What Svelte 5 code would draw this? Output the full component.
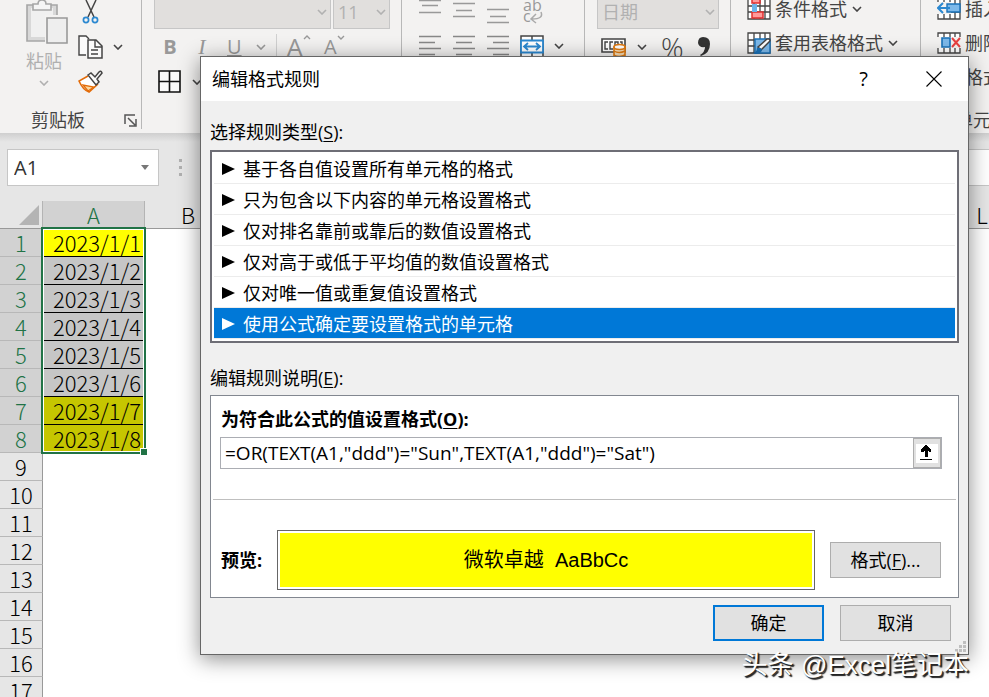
<script lang="ts">
	/**
	 * Spreadsheet window with the "Edit Formatting Rule" dialog open on top.
	 */

	const ruleTypes = [
		'基于各自值设置所有单元格的格式',
		'只为包含以下内容的单元格设置格式',
		'仅对排名靠前或靠后的数值设置格式',
		'仅对高于或低于平均值的数值设置格式',
		'仅对唯一值或重复值设置格式',
		'使用公式确定要设置格式的单元格'
	];

	const rows = Array.from({ length: 17 }, (_, i) => ({
		number: i + 1,
		date: i < 8 ? `2023/1/${i + 1}` : ''
	}));

	// Weekend dates are the ones the rule paints yellow
	const weekend = [1, 7, 8];

	let selectedRule = $state(5);
	let formula = $state('=OR(TEXT(A1,"ddd")="Sun",TEXT(A1,"ddd")="Sat")');
	let cellName = $state('A1');
</script>

{#snippet chevron()}
	<svg class="chevron" width="10" height="6" viewBox="0 0 10 6">
		<path d="M1 1l4 4 4-4" fill="none" stroke="currentColor" stroke-width="1.6" />
	</svg>
{/snippet}

{#snippet gridIcon()}
	<path d="M1 1h22v20H1zM1 8h22M1 14h22M7 1v20M13 1v20M18 1v20" fill="#fff" stroke="#444" stroke-width="1.3" />
{/snippet}

<div class="window">
	<header class="ribbon">
		<section class="group clipboard">
			<div class="clipboard-tools">
				<button class="paste" disabled>
					<svg width="42" height="44" viewBox="0 0 42 44">
						<path d="M1 5h30v36H1z" fill="#d8d8d8" stroke="#a6a6a6" stroke-width="1.6" />
						<path d="M5 8h22v29H5z" fill="#f0f0f0" />
						<path d="M7 10V4h5q0-4 4-4t4 4h5v6z" fill="#f5f5f5" stroke="#a6a6a6" stroke-width="1.6" />
						<path d="M19 15h23v29H19z" fill="#f3f2f1" />
						<path d="M21 18h20v25H21z" fill="#eee" stroke="#999" stroke-width="1.6" />
					</svg>
					<span>粘贴</span>
					{@render chevron()}
				</button>
				<div class="edit-tools">
					<button class="tool cut" aria-label="剪切">
						<svg width="18" height="24" viewBox="0 0 18 24">
							<path d="M4 0l8 17M14 0L6 17" fill="none" stroke="#444" stroke-width="1.5" />
							<circle cx="4" cy="20" r="2.6" fill="none" stroke="#2b88d0" stroke-width="1.7" />
							<circle cx="13" cy="20" r="2.6" fill="none" stroke="#2b88d0" stroke-width="1.7" />
						</svg>
					</button>
					<button class="tool copy" aria-label="复制">
						<svg width="25" height="24" viewBox="0 0 25 24">
							<path d="M8 20H1V1h7l3 3" fill="#fafafa" stroke="#444" stroke-width="1.4" />
							<path d="M10 5h8l6 6v12H10z" fill="#fafafa" stroke="#444" stroke-width="1.5" />
							<path d="M17 5v7h7M13 15h7M13 19h7" fill="none" stroke="#444" stroke-width="1.4" />
						</svg>
						{@render chevron()}
					</button>
					<button class="tool" aria-label="格式刷">
						<svg width="26" height="24" viewBox="0 0 26 24">
							<path d="M10 6L1 11q4 9 10 11l9-8" fill="#fff" stroke="#e36c09" stroke-width="1.6" />
							<path d="M5 15l5 6 6-4z" fill="#fcd9a0" stroke="#e36c09" stroke-width="1.3" />
							<path d="M10 5l3-2 4 4 4-5q2-2 3 1l-5 6 2 3-3 3z" fill="#fafafa" stroke="#444" stroke-width="1.5" />
						</svg>
					</button>
				</div>
			</div>
			<footer>
				<span>剪贴板</span>
				<button class="tool" aria-label="剪贴板设置">
					<svg width="13" height="13" viewBox="0 0 13 13">
						<path d="M1 10V1h10M4 4l7 7M12 5v7H5" fill="none" stroke="#555" stroke-width="1.5" />
					</svg>
				</button>
			</footer>
		</section>

		<section class="group font">
			<div class="combos">
				<label class="combo wide">
					<select disabled aria-label="字体"><option></option></select>
					{@render chevron()}
				</label>
				<label class="combo small">
					<select disabled aria-label="字号"><option>11</option></select>
					{@render chevron()}
				</label>
			</div>
			<div class="font-styles">
				<button class="bold" disabled>B</button>
				<button class="italic" disabled>I</button>
				<button class="underline" disabled>U</button>
				{@render chevron()}
				<i class="rule"></i>
				<button class="grow" disabled>A<svg width="8" height="5" viewBox="0 0 8 5"><path d="M1 4l3-3 3 3" fill="none" stroke="currentColor" stroke-width="1.4" /></svg></button>
				<button class="shrink" disabled>A<svg width="8" height="5" viewBox="0 0 8 5"><path d="M1 1l3 3 3-3" fill="none" stroke="currentColor" stroke-width="1.4" /></svg></button>
			</div>
			<button class="tool borders" aria-label="边框">
				<svg width="24" height="24" viewBox="0 0 24 24">
					<path d="M1 1h21v21H1zM11.500 1v21M1 11.500h21" fill="#fafafa" stroke="#111" stroke-width="1.6" />
				</svg>
				{@render chevron()}
			</button>
		</section>

		<section class="group align">
			<button class="tool" disabled aria-label="顶端对齐">
				<svg width="24" height="26" viewBox="0 0 24 26"><path d="M1 .5h22M4 5.500h16M1 12.500h22" stroke="#999" stroke-width="1.4" /></svg>
			</button>
			<button class="tool" disabled aria-label="垂直居中">
				<svg width="24" height="26" viewBox="0 0 24 26"><path d="M1 3.500h22M4 10.500h16M1 16.500h22" stroke="#999" stroke-width="1.4" /></svg>
			</button>
			<button class="tool" disabled aria-label="底端对齐">
				<svg width="24" height="26" viewBox="0 0 24 26"><path d="M1 9.500h22M4 16.500h16M1 22.500h22" stroke="#999" stroke-width="1.4" /></svg>
			</button>
			<button class="tool wrap" disabled aria-label="自动换行">
				<svg width="24" height="26" viewBox="0 0 24 26">
					<text x="3" y="11">ab</text>
					<text x="3" y="22">c</text>
					<path d="M21 12q3 7-9 7M16 14l-5 5 5 4" fill="none" stroke="#aaa" stroke-width="1.5" />
				</svg>
			</button>
			<button class="tool" disabled aria-label="左对齐">
				<svg width="24" height="26" viewBox="0 0 24 26"><path d="M1 3.500h22M1 9.500h16M1 15.500h22M1 21.500h16" stroke="#888" stroke-width="1.4" /></svg>
			</button>
			<button class="tool" disabled aria-label="居中">
				<svg width="24" height="26" viewBox="0 0 24 26"><path d="M1 3.500h22M4 9.500h16M1 15.500h22M4 21.500h16" stroke="#888" stroke-width="1.4" /></svg>
			</button>
			<button class="tool" disabled aria-label="右对齐">
				<svg width="24" height="26" viewBox="0 0 24 26"><path d="M1 3.500h22M7 9.500h16M1 15.500h22M7 21.500h16" stroke="#888" stroke-width="1.4" /></svg>
			</button>
			<button class="tool" aria-label="合并后居中">
				<svg width="24" height="26" viewBox="0 0 24 26">
					<path d="M1 3h22v21H1zM12 3v21" fill="#fff" stroke="#444" stroke-width="1.5" />
					<path d="M1 7.500h22v12H1z" fill="#fff" stroke="#2b88d0" stroke-width="1.8" />
					<path d="M4 13.500h16M8 10l-4 3.500L8 17M16 10l4 3.500-4 3.500" fill="none" stroke="#2b88d0" stroke-width="1.8" />
				</svg>
				{@render chevron()}
			</button>
		</section>

		<section class="group number">
			<label class="combo">
				<select disabled aria-label="数字格式"><option>日期</option></select>
				{@render chevron()}
			</label>
			<div class="number-tools">
				<button class="tool" aria-label="会计数字格式">
					<svg width="26" height="22" viewBox="0 0 26 22">
						<path d="M1 3h23v13H1z" fill="#fff" stroke="#444" stroke-width="1.6" />
						<path d="M7 6H4v7h3M12 6H9v7h3M14 9V6h3v3M19 6h2v3" fill="none" stroke="#444" stroke-width="1.4" />
						<path d="M13 11v10h11V11z" fill="#fbe0b8" stroke="#e07a10" stroke-width="1.6" />
						<path d="M13 15q5 3 11 0M13 19q5 3 11 0" fill="none" stroke="#e07a10" stroke-width="1.4" />
						<ellipse cx="18.500" cy="11" rx="5.500" ry="2.500" fill="#fff" stroke="#e07a10" stroke-width="1.6" />
					</svg>
					{@render chevron()}
				</button>
				<button class="percent">%</button>
				<button class="tool" aria-label="千位分隔样式">
					<svg width="12" height="20" viewBox="0 0 12 20">
						<path d="M5 0q7 0 7 7 0 9-9 12l-1-1q5-3 5-8-6 1-7-4Q0 0 5 0z" fill="#333" />
					</svg>
				</button>
			</div>
		</section>

		<section class="group styles">
			<button class="command">
				<svg width="24" height="22" viewBox="0 0 24 22">
					{@render gridIcon()}
					<path d="M5 0h8v5H5zM5 14h11v6H5z" fill="#ff9a9a" stroke="#e03030" stroke-width="1.5" />
					<path d="M5 6h5v8H5z" fill="#6db5ea" />
				</svg>
				<span>条件格式</span>
				{@render chevron()}
			</button>
			<button class="command">
				<svg width="24" height="22" viewBox="0 0 24 22">
					{@render gridIcon()}
					<path d="M8 7h15v14H8z" fill="#7db9ea" stroke="#1a72b8" stroke-width="1.4" />
					<path d="M22 7q2 1 0 3l-8 8-3-3 9-8z" fill="#fff" stroke="#444" stroke-width="1.5" />
					<path d="M5 21q5 0 5-5 4-1 5 2-1 4-6 4z" fill="#1a72b8" />
				</svg>
				<span>套用表格格式</span>
				{@render chevron()}
			</button>
		</section>

		<section class="group cells">
			<div class="commands">
				<button class="command">
					<svg width="24" height="22" viewBox="0 0 24 22">
						{@render gridIcon()}
						<path d="M0 4h14v12H0z" fill="#f3f2f1" />
						<path d="M10 6h13v8H10z" fill="#7db9ea" stroke="#1a72b8" stroke-width="1.4" />
						<path d="M13 10H1M6 5l-5 5 5 5" fill="none" stroke="#2b88d0" stroke-width="2" />
					</svg>
					<span>插入</span>
				</button>
				<button class="command">
					<svg width="24" height="22" viewBox="0 0 24 22">
						{@render gridIcon()}
						<path d="M0 5h24v11H0z" fill="#f3f2f1" />
						<path d="M5 6h8v9H5z" fill="#7db9ea" stroke="#1a72b8" stroke-width="1.6" />
						<path d="M15 6l8 9M23 6l-8 9" stroke="#e84040" stroke-width="2" />
					</svg>
					<span>删除</span>
				</button>
				<button class="command">
					<svg width="24" height="22" viewBox="0 0 24 22">{@render gridIcon()}</svg>
					<span>格式</span>
				</button>
			</div>
			<footer>单元格</footer>
		</section>
	</header>

	<div class="formula-bar">
		<label class="name-box">
			<input aria-label="名称框" bind:value={cellName} />
			<svg width="8" height="5" viewBox="0 0 8 5"><path d="M0 0h8L4 5z" fill="#777" /></svg>
		</label>
		<div class="dots"><i></i><i></i><i></i></div>
		<input class="formula-input" aria-label="编辑栏" />
	</div>

	<main>
		<table>
			<colgroup>
				<col class="col-number" />
				<col class="col-a" />
				<col class="col-b" />
				<col />
				<col class="col-l" />
			</colgroup>
			<thead>
				<tr>
					<th class="corner">
						<svg width="20" height="20" viewBox="0 0 20 20"><path d="M20 0v20H0z" fill="#b4b4b4" /></svg>
					</th>
					<th class="active">A</th>
					<th>B</th>
					<th></th>
					<th>L</th>
				</tr>
			</thead>
			<tbody>
				{#each rows as row}
					<tr>
						<th class:active={row.date}>{row.number}</th>
						<td
							class:filled={row.date}
							class:weekend={weekend.includes(row.number)}
							class:current={row.number === 1}
						>
							{row.date}
						</td>
						<td colspan="3"></td>
					</tr>
				{/each}
			</tbody>
		</table>
		<div class="selection"><i></i></div>
	</main>

	<div class="dialog" role="dialog" aria-labelledby="dialog-title">
		<div class="title-bar">
			<h1 id="dialog-title">编辑格式规则</h1>
			<button class="help" aria-label="帮助">?</button>
			<button class="close" aria-label="关闭">
				<svg width="16" height="16" viewBox="0 0 16 16"><path d="M.5.5l15 15M15.500.5l-15 15" stroke="#000" stroke-width="1.1" /></svg>
			</button>
		</div>

		<div class="dialog-body">
			<h2 id="rule-types">选择规则类型(<u>S</u>):</h2>
			<ul class="rule-list" role="listbox" aria-labelledby="rule-types">
				{#each ruleTypes as type, i}
					<li role="option" aria-selected={i === selectedRule}>
						<button class:selected={i === selectedRule} onclick={() => (selectedRule = i)}>
							<svg width="13" height="12" viewBox="0 0 13 12"><path d="M0 0l13 6-13 6z" fill="currentColor" /></svg>
							{type}
						</button>
					</li>
				{/each}
			</ul>

			<h2>编辑规则说明(<u>E</u>):</h2>
			<div class="rule-box">
				<label class="formula-label" for="rule-formula">为符合此公式的值设置格式(<u>O</u>):</label>
				<div class="formula-field">
					<input id="rule-formula" bind:value={formula} />
					<button aria-label="折叠对话框">
						<svg width="22" height="19" viewBox="0 0 22 19">
							<path d="M0 0h22v19H0z" fill="#fff" />
							<path d="M9 1h2v1h1v1h1v1h1v1h1v3h-2V7h-1v6H9V7H8v1H5V5h1V4h1V3h1V2h1zM4 15h12v1H4z" fill="#000" />
						</svg>
					</button>
				</div>
				<hr />
				<div class="preview-row">
					<strong>预览:</strong>
					<div class="preview">微软卓越&nbsp; AaBbCc</div>
					<button class="push">格式(<u>F</u>)...</button>
				</div>
			</div>

			<div class="actions">
				<button class="push default">确定</button>
				<button class="push">取消</button>
			</div>
		</div>
		<svg class="grip" width="11" height="11" viewBox="0 0 11 11">
			<path d="M8 0h3v3H8zM4 4h3v3H4zM8 4h3v3H8zM0 8h3v3H0zM4 8h3v3H4zM8 8h3v3H8z" fill="#bfbfbf" />
		</svg>
	</div>

	<div class="watermark">头条 @Excel笔记本</div>
</div>

<style>
	:global(body) {
		margin: 0;
	}

	.window {
		position: relative;
		height: 100vh;
		overflow: hidden;
		background: #fff;
		color: #000;
		font-family: 'Open Sans', 'Noto Sans CJK SC', sans-serif;
		font-size: 18px;
	}

	.window * {
		box-sizing: border-box;
	}

	button,
	input,
	select {
		margin: 0;
		padding: 0;
		border: 0;
		border-radius: 0;
		background: none;
		color: inherit;
		font: inherit;
	}

	svg {
		display: block;
		flex: none;
	}

	u {
		text-underline-offset: 2px;
		text-decoration-thickness: 1px;
	}

	/* Ribbon */
	.ribbon {
		display: flex;
		padding-bottom: 4px;
		background: #f3f2f1;
		color: #444;
		line-height: 18px;
	}

	.group {
		flex: none;
		border-right: 1px solid #b8b8b8;
	}

	.group footer {
		display: flex;
		align-items: center;
		height: 18px;
	}

	.tool {
		display: flex;
		align-items: center;
		gap: 10px;
	}

	.clipboard {
		width: 142px;
	}

	.clipboard-tools {
		display: flex;
		gap: 16px;
		height: 100px;
		padding-left: 26px;
	}

	.paste {
		display: flex;
		flex-direction: column;
		align-items: flex-start;
		gap: 8px;
		width: 36px;
		color: #b0b0b0;
	}

	.paste span {
		white-space: nowrap;
	}

	.paste .chevron {
		margin: 2px 0 0 13px;
	}

	.edit-tools {
		display: flex;
		flex-direction: column;
		gap: 11px;
	}

	.cut {
		padding-left: 4px;
	}

	.clipboard footer {
		justify-content: space-between;
		margin-top: 11px;
		padding: 0 4px 0 31px;
	}

	.font {
		width: 260px;
		padding-left: 12px;
	}

	.combos {
		display: flex;
		gap: 2px;
	}

	.combo {
		display: grid;
		align-items: center;
		width: 122px;
		height: 29px;
		padding-bottom: 4px;
		border: 1px solid #c6c6c6;
		border-top: 0;
		background: #e1dfdd;
		color: #b1b1b1;
	}

	.combo > :global(*) {
		grid-area: 1 / 1;
	}

	.combo select {
		width: 100%;
		height: 24px;
		padding-left: 4px;
		appearance: none;
		opacity: 1;
	}

	.combo .chevron {
		justify-self: end;
		margin-right: 3px;
	}

	.wide {
		width: 177px;
	}

	.small {
		width: 57px;
	}

	.font-styles {
		display: flex;
		align-items: center;
		gap: 18px;
		height: 35px;
		padding-left: 9px;
		color: #999;
		font-size: 20px;
	}

	.font-styles button {
		min-width: 14px;
		line-height: 24px;
	}

	.font-styles .bold {
		font-weight: 700;
	}

	.font-styles .italic {
		font-family: 'Liberation Serif', serif;
		font-size: 22px;
		font-style: italic;
	}

	.font-styles .underline {
		text-decoration: underline;
	}

	.font-styles .chevron {
		margin-left: -4px;
	}

	.rule {
		width: 1px;
		height: 26px;
		margin: 0 -8px;
		background: #d0d0d0;
	}

	.font-styles .grow,
	.font-styles .shrink {
		display: flex;
		align-items: flex-start;
	}

	.font-styles .grow {
		margin-right: -5px;
		font-size: 26px;
	}

	.borders {
		height: 36px;
		margin-left: 4px;
	}

	.align {
		display: grid;
		grid-template-columns: 34px 34px 34px 1fr;
		grid-template-rows: 33px 26px;
		align-content: start;
		align-items: start;
		width: 183px;
		padding-left: 16px;
	}

	.wrap text {
		fill: #999;
		font-size: 16px;
	}

	.number {
		width: 146px;
		padding-left: 12px;
	}

	.number-tools {
		display: flex;
		align-items: center;
		gap: 14px;
		height: 36px;
		padding-left: 4px;
	}

	.percent {
		font-size: 28px;
		font-weight: 300;
		line-height: 28px;
	}

	.styles {
		display: flex;
		flex-direction: column;
		gap: 16px;
		width: 190px;
		padding-left: 16px;
	}

	.command {
		display: flex;
		align-items: center;
		gap: 4px;
		height: 18px;
		white-space: nowrap;
	}

	.command .chevron {
		margin-left: 1px;
	}

	.cells {
		flex: 1;
		min-width: 0;
		overflow: hidden;
		border: 0;
	}

	.commands {
		display: flex;
		flex-direction: column;
		gap: 16px;
		padding-left: 16px;
	}

	.cells footer {
		margin-top: 25px;
		padding-left: 34px;
		white-space: nowrap;
	}

	/* Formula bar */
	.formula-bar {
		display: flex;
		align-items: center;
		gap: 20px;
		padding: 16px 0 15px 7px;
		background: linear-gradient(#cfcfcf, #e6e6e6 9px);
	}

	.name-box {
		display: flex;
		align-items: center;
		width: 152px;
		height: 37px;
		padding: 0 9px 0 6px;
		border: 1px solid #c6c6c6;
		background: #fff;
		color: #333;
		font-size: 20px;
	}

	.name-box input {
		flex: 1;
		min-width: 0;
		outline: none;
	}

	.dots {
		display: grid;
		gap: 4px;
		width: 81px;
	}

	.dots i {
		width: 3px;
		height: 3px;
		background: #b0b0b0;
	}

	.formula-input {
		flex: 1;
		height: 37px;
		border: 1px solid #c6c6c6;
		border-right: 0;
		background: #fff;
	}

	/* Sheet */
	main {
		position: relative;
	}

	table {
		width: 100%;
		table-layout: fixed;
		border-collapse: separate;
		border-spacing: 0;
		font-family: 'Noto Sans CJK SC', sans-serif;
		font-size: 22px;
		font-weight: 300;
		line-height: 27px;
	}

	.col-number {
		width: 43px;
	}

	.col-a {
		width: 102px;
	}

	.col-b {
		width: 86px;
	}

	.col-l {
		width: 14px;
	}

	th {
		height: 28px;
		padding: 0;
		background: #e6e6e6;
		font-weight: 300;
	}

	thead th {
		border-bottom: 1px solid #999;
	}

	thead .active {
		border-right: 1px solid #b4b4b4;
	}

	.corner {
		padding: 0 3px 0 19px;
		border-right: 1px solid #b4b4b4;
	}

	tbody th {
		border-right: 1px solid #999;
		border-bottom: 1px solid #b8b8b8;
	}

	th.active {
		background: #d2d2d2;
		color: #217346;
	}

	td {
		padding: 0;
		text-align: right;
	}

	.filled {
		padding-right: 4px;
		border-bottom: 1px solid #000;
		background: #c6c6c6;
	}

	.weekend {
		background: #c6c600;
	}

	.current {
		background: #ff0;
	}

	/* Green frame around A1:A8, drawn over the cells */
	.selection {
		position: absolute;
		top: 26px;
		left: 41px;
		width: 105px;
		height: 227px;
		border: 2px solid #217346;
		box-shadow: inset 0 0 0 1px #fff;
		pointer-events: none;
	}

	.selection i {
		position: absolute;
		right: -4px;
		bottom: -4px;
		width: 8px;
		height: 8px;
		border: 1px solid #fff;
		background: #217346;
	}

	/* Dialog */
	.dialog {
		position: absolute;
		top: 56px;
		right: 20px;
		left: 200px;
		border: 1px solid #666;
		background: #f0f0f0;
		box-shadow: 0 4px 20px rgba(0, 0, 0, 0.45);
		line-height: 24px;
	}

	.title-bar {
		display: flex;
		align-items: center;
		height: 44px;
		padding: 0 26px 0 11px;
		background: #fff;
	}

	h1,
	h2 {
		margin: 0;
		font-size: 18px;
		font-weight: 400;
	}

	h1 {
		flex: 1;
	}

	.help {
		margin-right: 58px;
		font-size: 20px;
	}

	.dialog-body {
		padding: 19px 9px 13px;
	}

	.rule-list {
		margin: 6px 0 23px;
		padding: 1px 2px 2px;
		border: 2px solid #6e6e76;
		background: #fff;
		list-style: none;
	}

	.rule-list button {
		display: flex;
		align-items: center;
		gap: 8px;
		width: 100%;
		height: 31px;
		padding: 2px 0 0 8px;
		border-bottom: 1px solid #ececec;
		text-align: left;
	}

	.rule-list .selected {
		background: #0078d7;
		color: #fff;
	}

	.rule-box {
		margin-top: 5px;
		padding: 11px 2px 7px;
		border: 1px solid #828790;
		background: #fff;
	}

	.formula-label {
		display: block;
		padding-left: 8px;
		font-weight: 700;
	}

	.formula-field {
		display: flex;
		height: 32px;
		margin: 6px 14px 30px 7px;
		border: 1px solid #abadb3;
	}

	.formula-field input {
		flex: 1;
		min-width: 0;
		padding-left: 4px;
		outline: none;
		font-size: 19px;
	}

	.formula-field button {
		display: grid;
		place-items: center;
		width: 28px;
		border: 1px solid #adadad;
		background: #e1e1e1;
	}

	hr {
		height: 1px;
		margin: 0 0 30px;
		border: 0;
		background: #bfbfbf;
	}

	.preview-row {
		display: flex;
		align-items: center;
		gap: 15px;
		padding: 0 15px 0 8px;
	}

	.preview {
		flex: 1;
		padding: 2px;
		border: 1px solid #666;
		background: #ff0 content-box;
		font-family: 'Liberation Sans', 'Noto Sans CJK SC', sans-serif;
		font-size: 20px;
		line-height: 54px;
		text-align: center;
	}

	.push {
		width: 111px;
		height: 36px;
		border: 1px solid #adadad;
		background: #e1e1e1;
	}

	.push.default {
		border: 2px solid #0078d7;
	}

	.actions {
		display: flex;
		justify-content: flex-end;
		gap: 16px;
		padding: 7px 8px 0 0;
	}

	.grip {
		position: absolute;
		right: 2px;
		bottom: 2px;
	}

	.watermark {
		position: absolute;
		right: 20px;
		bottom: 14px;
		color: #fff;
		font-family: 'Liberation Sans', 'Noto Sans CJK SC', sans-serif;
		font-size: 26px;
		line-height: 36px;
		text-shadow: 1px 1px 1px #222, 2px 2px 1px #222;
	}
</style>
